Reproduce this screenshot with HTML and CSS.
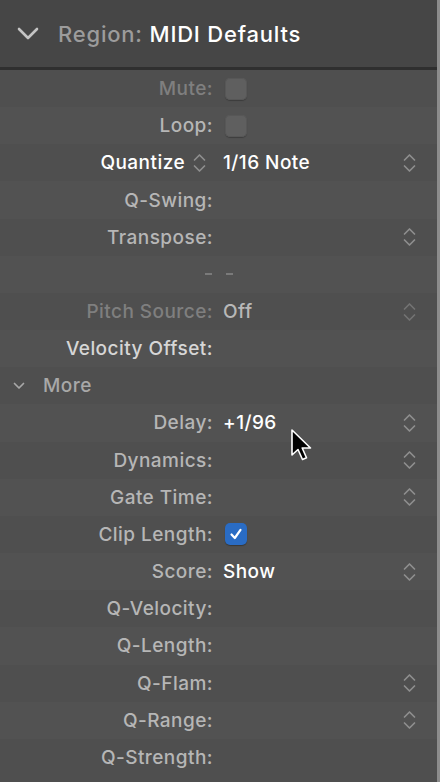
FILE: index.html
```html
<!DOCTYPE html>
<html>
<head>
<meta charset="utf-8">
<link rel="stylesheet" href="styles.css">
</head>
<body>
<div class="panel">
  <div class="header">
    <svg class="hchev" width="22" height="14" viewBox="0 0 22 14"><path d="M2 2 L11 11 L20 2" fill="none" stroke="#c4c4c4" stroke-width="2.6" stroke-linecap="round" stroke-linejoin="round"/></svg>
    <span class="htitle"><span class="hdim">Region:</span> MIDI Defaults</span>
  </div>
  <div class="rows">
    <div class="row"><span class="label dim">Mute:</span><span class="value"><span class="cb"></span></span><span class="st"></span></div>
    <div class="row alt"><span class="label">Loop:</span><span class="value"><span class="cb"></span></span><span class="st"></span></div>
    <div class="row"><span class="label white">Quantize <svg class="step inl" width="13" height="22" viewBox="0 0 13 22"><path d="M1.5 8 L6.5 3 L11.5 8 M1.5 14 L6.5 19 L11.5 14" fill="none" stroke="#8e8e8e" stroke-width="1.7" stroke-linecap="round" stroke-linejoin="round"/></svg></span><span class="value white">1/16 Note</span><span class="st"><svg class="step" width="13" height="22" viewBox="0 0 13 22"><path d="M1.5 8 L6.5 3 L11.5 8 M1.5 14 L6.5 19 L11.5 14" fill="none" stroke="#8e8e8e" stroke-width="1.7" stroke-linecap="round" stroke-linejoin="round"/></svg></span></div>
    <div class="row alt"><span class="label">Q-Swing:</span><span class="value"></span><span class="st"></span></div>
    <div class="row"><span class="label">Transpose:</span><span class="value"></span><span class="st"><svg class="step" width="13" height="22" viewBox="0 0 13 22"><path d="M1.5 8 L6.5 3 L11.5 8 M1.5 14 L6.5 19 L11.5 14" fill="none" stroke="#8e8e8e" stroke-width="1.7" stroke-linecap="round" stroke-linejoin="round"/></svg></span></div>
    <div class="row alt"><span class="label dash"><span class="dbar"></span></span><span class="value dash"><span class="dbar"></span></span><span class="st"></span></div>
    <div class="row"><span class="label dim">Pitch Source:</span><span class="value soft">Off</span><span class="st"><svg class="step faint" width="13" height="22" viewBox="0 0 13 22"><path d="M1.5 8 L6.5 3 L11.5 8 M1.5 14 L6.5 19 L11.5 14" fill="none" stroke="#737373" stroke-width="1.7" stroke-linecap="round" stroke-linejoin="round"/></svg></span></div>
    <div class="row alt"><span class="label light">Velocity Offset:</span><span class="value"></span><span class="st"></span></div>
    <div class="row more"><svg class="mchev" width="12" height="8" viewBox="0 0 12 8"><path d="M1.5 1.5 L6 6 L10.5 1.5" fill="none" stroke="#a8a8a8" stroke-width="1.7" stroke-linecap="round" stroke-linejoin="round"/></svg><span class="mlabel">More</span></div>
    <div class="row alt"><span class="label">Delay:</span><span class="value white">+1/96</span><span class="st"><svg class="step" width="13" height="22" viewBox="0 0 13 22"><path d="M1.5 8 L6.5 3 L11.5 8 M1.5 14 L6.5 19 L11.5 14" fill="none" stroke="#8e8e8e" stroke-width="1.7" stroke-linecap="round" stroke-linejoin="round"/></svg></span></div>
    <div class="row"><span class="label">Dynamics:</span><span class="value"></span><span class="st"><svg class="step" width="13" height="22" viewBox="0 0 13 22"><path d="M1.5 8 L6.5 3 L11.5 8 M1.5 14 L6.5 19 L11.5 14" fill="none" stroke="#8e8e8e" stroke-width="1.7" stroke-linecap="round" stroke-linejoin="round"/></svg></span></div>
    <div class="row alt"><span class="label">Gate Time:</span><span class="value"></span><span class="st"><svg class="step" width="13" height="22" viewBox="0 0 13 22"><path d="M1.5 8 L6.5 3 L11.5 8 M1.5 14 L6.5 19 L11.5 14" fill="none" stroke="#8e8e8e" stroke-width="1.7" stroke-linecap="round" stroke-linejoin="round"/></svg></span></div>
    <div class="row"><span class="label">Clip Length:</span><span class="value"><span class="cb on"><svg width="16" height="16" viewBox="0 0 16 16"><path d="M3.5 8.5 L6.8 12 L12.5 3.8" fill="none" stroke="#ffffff" stroke-width="2.2" stroke-linecap="round" stroke-linejoin="round"/></svg></span></span><span class="st"></span></div>
    <div class="row alt"><span class="label">Score:</span><span class="value white">Show</span><span class="st"><svg class="step" width="13" height="22" viewBox="0 0 13 22"><path d="M1.5 8 L6.5 3 L11.5 8 M1.5 14 L6.5 19 L11.5 14" fill="none" stroke="#8e8e8e" stroke-width="1.7" stroke-linecap="round" stroke-linejoin="round"/></svg></span></div>
    <div class="row"><span class="label">Q-Velocity:</span><span class="value"></span><span class="st"></span></div>
    <div class="row alt"><span class="label">Q-Length:</span><span class="value"></span><span class="st"></span></div>
    <div class="row"><span class="label">Q-Flam:</span><span class="value"></span><span class="st"><svg class="step" width="13" height="22" viewBox="0 0 13 22"><path d="M1.5 8 L6.5 3 L11.5 8 M1.5 14 L6.5 19 L11.5 14" fill="none" stroke="#8e8e8e" stroke-width="1.7" stroke-linecap="round" stroke-linejoin="round"/></svg></span></div>
    <div class="row alt"><span class="label">Q-Range:</span><span class="value"></span><span class="st"><svg class="step" width="13" height="22" viewBox="0 0 13 22"><path d="M1.5 8 L6.5 3 L11.5 8 M1.5 14 L6.5 19 L11.5 14" fill="none" stroke="#8e8e8e" stroke-width="1.7" stroke-linecap="round" stroke-linejoin="round"/></svg></span></div>
    <div class="row"><span class="label">Q-Strength:</span><span class="value"></span><span class="st"></span></div>
  </div>
  <svg class="cursor" width="26" height="36" viewBox="0 0 26 36"><path d="M2 2 L2 27 L8 21.5 L12.5 31.5 L16.5 29.8 L12.2 20 L20.5 20 Z" fill="#000" stroke="#fff" stroke-width="1.6" stroke-linejoin="round"/></svg>
</div>
</body>
</html>
```
FILE: styles.css
```css
html, body {
  margin: 0;
  padding: 0;
  background: #4f4f4f;
}
body {
  width: 440px;
  height: 782px;
  overflow: hidden;
  font-family: Inter, "Open Sans", "Liberation Sans", sans-serif;
}
.panel {
  position: relative;
  width: 437px;
  height: 782px;
  border-right: 3px solid #8c8c8c;
  background: #4f4f4f;
  display: flex;
  flex-direction: column;
}
.header {
  height: 67px;
  background: #464646;
  border-bottom: 3px solid #2f2f2f;
  display: flex;
  align-items: center;
  padding-left: 17px;
  gap: 19px;
  flex-shrink: 0;
}
.hchev {
  margin-top: 1px;
}
.htitle {
  font-size: 22px;
  color: #ffffff;
  font-weight: 500;
  letter-spacing: 0.8px;
  margin-top: 1px;
}
.hdim {
  color: #9c9c9c;
}
.rows {
  display: flex;
  flex-direction: column;
}
.row {
  height: 37.17px;
  display: grid;
  grid-template-columns: 213px 1fr 24px;
  column-gap: 10px;
  align-items: center;
  padding-right: 16px;
  background: #4f4f4f;
  font-size: 19px;
  letter-spacing: 0.45px;
  font-weight: 500;
}
.row.alt {
  background: #525252;
}
.label {
  text-align: right;
  color: #b6b6b6;
  white-space: nowrap;
  display: flex;
  justify-content: flex-end;
  align-items: center;
}
.label.dim {
  color: #7f7f7f;
}
.label.white {
  color: #ffffff;
  gap: 8px;
  padding-right: 7px;
}
.label.light {
  color: #d6d6d6;
}
.value {
  color: #b6b6b6;
  display: flex;
  align-items: center;
  white-space: nowrap;
}
.value.white {
  color: #ffffff;
}
.value.soft {
  color: #b8b8b8;
}
.dbar {
  display: block;
  width: 7px;
  height: 2px;
  background: #7a7a7a;
}
.label.dash {
  padding-right: 1px;
}
.value.dash {
  padding-left: 3px;
}
.st {
  display: flex;
  align-items: center;
  justify-content: center;
}
.step {
  display: block;
}
.cb {
  width: 22px;
  height: 22px;
  border-radius: 5px;
  background: #5f5f5f;
  box-shadow: inset 0 0 0 1px #575757, 0 1px 1px rgba(0,0,0,0.25);
  display: flex;
  align-items: center;
  justify-content: center;
  margin-left: 2px;
}
.cb.on {
  background: #2a6cc4;
  box-shadow: 0 1px 1px rgba(0,0,0,0.3);
}
.row.more {
  display: flex;
  align-items: center;
  padding-left: 13px;
  gap: 18px;
}
.mlabel {
  color: #a8a8a8;
  font-size: 19px;
}
.cursor {
  position: absolute;
  left: 290px;
  top: 428px;
}
```
